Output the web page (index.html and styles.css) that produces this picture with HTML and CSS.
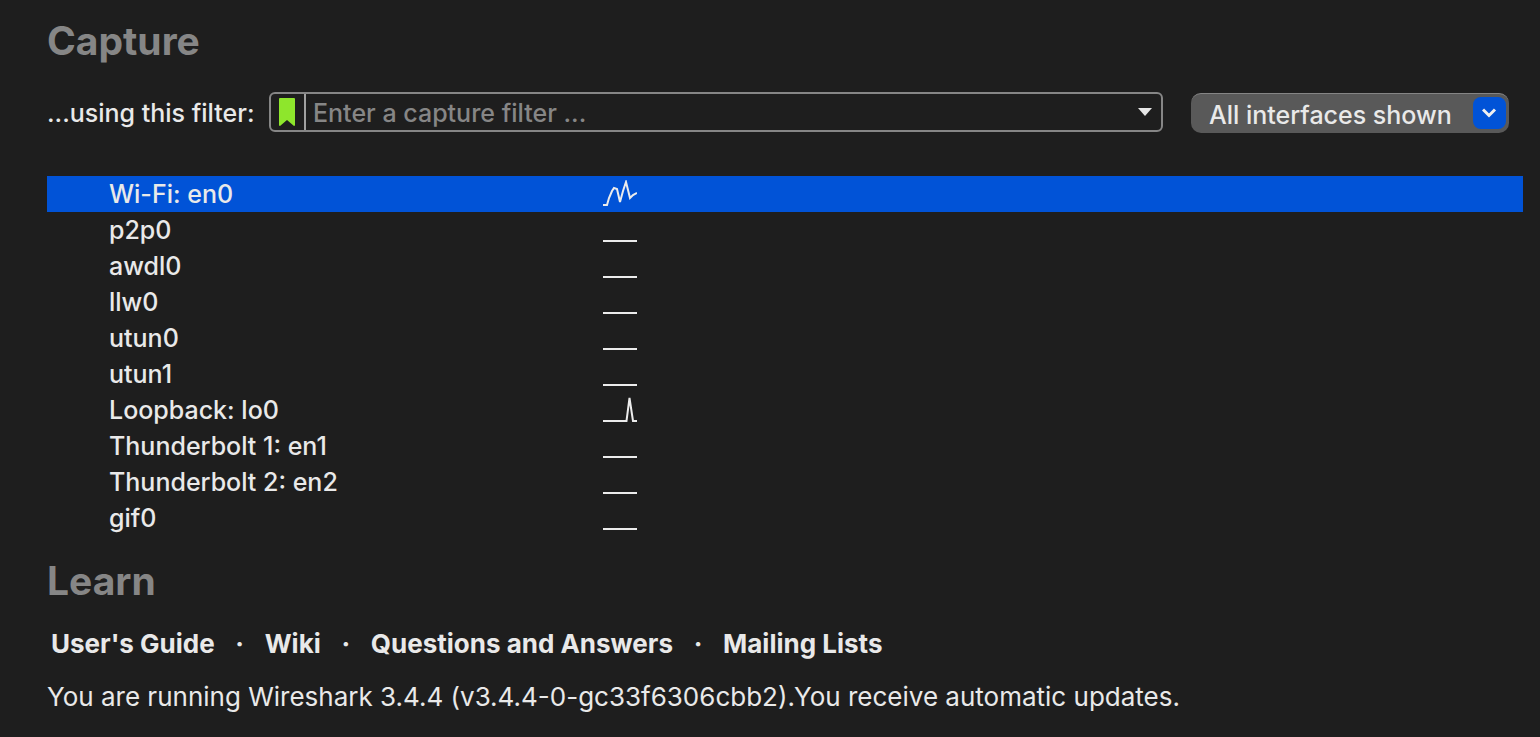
FILE: index.html
```html
<!DOCTYPE html>
<html lang="en">
<head>
<meta charset="utf-8">
<title>Wireshark</title>
<link rel="stylesheet" href="styles.css">
</head>
<body>
<main class="welcome">
  <section class="capture">
    <h1 class="heading">Capture</h1>
    <form class="filter-row">
      <label class="filter-label" for="filter">...using this filter:</label>
      <div class="filter-box">
        <button class="bookmark" type="button" aria-label="Filter bookmarks">
          <svg width="16" height="28" viewBox="0 0 16 28"><path d="M1 0H15Q16 0 16 1V27Q16 28 15 28L8 22L1 28Q0 28 0 27V1Q0 0 1 0Z" fill="#8ee62c"/></svg>
        </button>
        <input class="filter-input" id="filter" type="text" placeholder="Enter a capture filter ...">
        <button class="history" type="button" aria-label="Recent filters">
          <svg width="14" height="8" viewBox="0 0 14 8"><path d="M0 0H14L7 8Z" fill="#e6e6e6"/></svg>
        </button>
      </div>
      <div class="interfaces">
        <select class="interfaces-select" aria-label="Interfaces">
          <option>All interfaces shown</option>
        </select>
        <span class="interfaces-arrow">
          <svg width="15" height="10" viewBox="0 0 15 10"><path d="M1 1.5L7 7.5L13 1.5" fill="none" stroke="#f0f0f0" stroke-width="3"/></svg>
        </span>
      </div>
    </form>
    <table class="interface-list" aria-label="Interfaces">
      <tbody>
        <tr class="selected"><td class="name">Wi-Fi: en0</td><td class="traffic"><svg class="spark" viewBox="0 0 34 26"><path d="M0 25H4L6 18L9 11L11 8L14 9L17 22L20 11L23 2L25 10L27 18L30 15L34 13"/></svg></td></tr>
        <tr><td class="name">p2p0</td><td class="traffic"><svg class="spark" viewBox="0 0 34 26"><path d="M0 25H34"/></svg></td></tr>
        <tr><td class="name">awdl0</td><td class="traffic"><svg class="spark" viewBox="0 0 34 26"><path d="M0 25H34"/></svg></td></tr>
        <tr><td class="name">llw0</td><td class="traffic"><svg class="spark" viewBox="0 0 34 26"><path d="M0 25H34"/></svg></td></tr>
        <tr><td class="name">utun0</td><td class="traffic"><svg class="spark" viewBox="0 0 34 26"><path d="M0 25H34"/></svg></td></tr>
        <tr><td class="name">utun1</td><td class="traffic"><svg class="spark" viewBox="0 0 34 26"><path d="M0 25H34"/></svg></td></tr>
        <tr><td class="name">Loopback: lo0</td><td class="traffic"><svg class="spark" viewBox="0 0 34 26"><path d="M0 25H23.5L26.5 2L30 25H34"/></svg></td></tr>
        <tr><td class="name">Thunderbolt 1: en1</td><td class="traffic"><svg class="spark" viewBox="0 0 34 26"><path d="M0 25H34"/></svg></td></tr>
        <tr><td class="name">Thunderbolt 2: en2</td><td class="traffic"><svg class="spark" viewBox="0 0 34 26"><path d="M0 25H34"/></svg></td></tr>
        <tr><td class="name">gif0</td><td class="traffic"><svg class="spark" viewBox="0 0 34 26"><path d="M0 25H34"/></svg></td></tr>
      </tbody>
    </table>
  </section>
  <section class="learn">
    <h1 class="heading">Learn</h1>
    <nav class="links">
      <a href="#guide">User's Guide</a><span class="dot">·</span>
      <a href="#wiki">Wiki</a><span class="dot">·</span>
      <a href="#questions">Questions and Answers</a><span class="dot">·</span>
      <a href="#lists">Mailing Lists</a>
    </nav>
    <p class="version">You are running Wireshark 3.4.4 (v3.4.4-0-gc33f6306cbb2).You receive automatic updates.</p>
  </section>
</main>
</body>
</html>
```
FILE: styles.css
```css
* {
  box-sizing: border-box;
}

body {
  margin: 0;
  background: #1e1e1e;
  color: #e9e9e9;
  font: 500 25px/36px Inter, "Liberation Sans", sans-serif;
}

button,
input,
select {
  margin: 0;
  padding: 0;
  border: 0;
  background: none;
  color: inherit;
  font: inherit;
}

svg {
  display: block;
}

.welcome {
  padding: 16px 17px 0 47px;
}

.heading {
  margin: 0;
  color: #868686;
  font-size: 39px;
  line-height: 50px;
  font-weight: 700;
}

.filter-row {
  display: flex;
  align-items: center;
  margin: 26px 14px 0 0;
}

.filter-label {
  width: 222px;
  flex: none;
  padding-top: 2px;
}

.filter-box {
  display: flex;
  flex: 1;
  min-width: 0;
  height: 40px;
  border: 2px solid #868686;
  border-radius: 6px;
}

.bookmark {
  display: flex;
  align-items: center;
  justify-content: center;
  width: 35px;
  padding-right: 2px;
  border-right: 2px solid #a0a0a0;
}

.filter-input {
  flex: 1;
  min-width: 0;
  padding: 2px 0 0 7px;
  outline: 0;
}

.filter-input::placeholder {
  color: #868686;
  opacity: 1;
}

.history {
  display: flex;
  align-items: center;
  padding: 0 9px;
}

.interfaces {
  position: relative;
  width: 318px;
  flex: none;
  margin: 1px 0 -1px 28px;
}

.interfaces-select {
  display: block;
  width: 100%;
  height: 40px;
  padding: 2px 0 0 18px;
  border-top: 1px solid #858585;
  border-radius: 10px;
  background: #595959;
  appearance: none;
}

.interfaces-arrow {
  position: absolute;
  top: 4px;
  right: 3px;
  display: flex;
  align-items: center;
  justify-content: center;
  width: 33px;
  height: 32px;
  border-radius: 8px;
  background: #0153d7;
  pointer-events: none;
}

.interface-list {
  width: 100%;
  margin-top: 44px;
  border-collapse: collapse;
  table-layout: fixed;
}

.interface-list td {
  height: 36px;
  padding: 0;
}

.interface-list .name {
  width: 556px;
  padding-left: 62px;
}

.selected {
  background: #0153d7;
}

.spark {
  width: 34px;
  height: 26px;
  margin-bottom: 2px;
  fill: none;
  stroke: #ececec;
  stroke-width: 2;
}

.learn {
  margin-top: 20px;
}

.links {
  display: flex;
  margin: 20px 0 0 4px;
  font-size: 26px;
  font-weight: 700;
}

.links a {
  color: inherit;
  text-decoration: none;
}

.dot {
  width: 50px;
  text-align: center;
}

.version {
  margin: 17px 0 0;
  font-size: 26px;
  font-weight: 400;
}
```
